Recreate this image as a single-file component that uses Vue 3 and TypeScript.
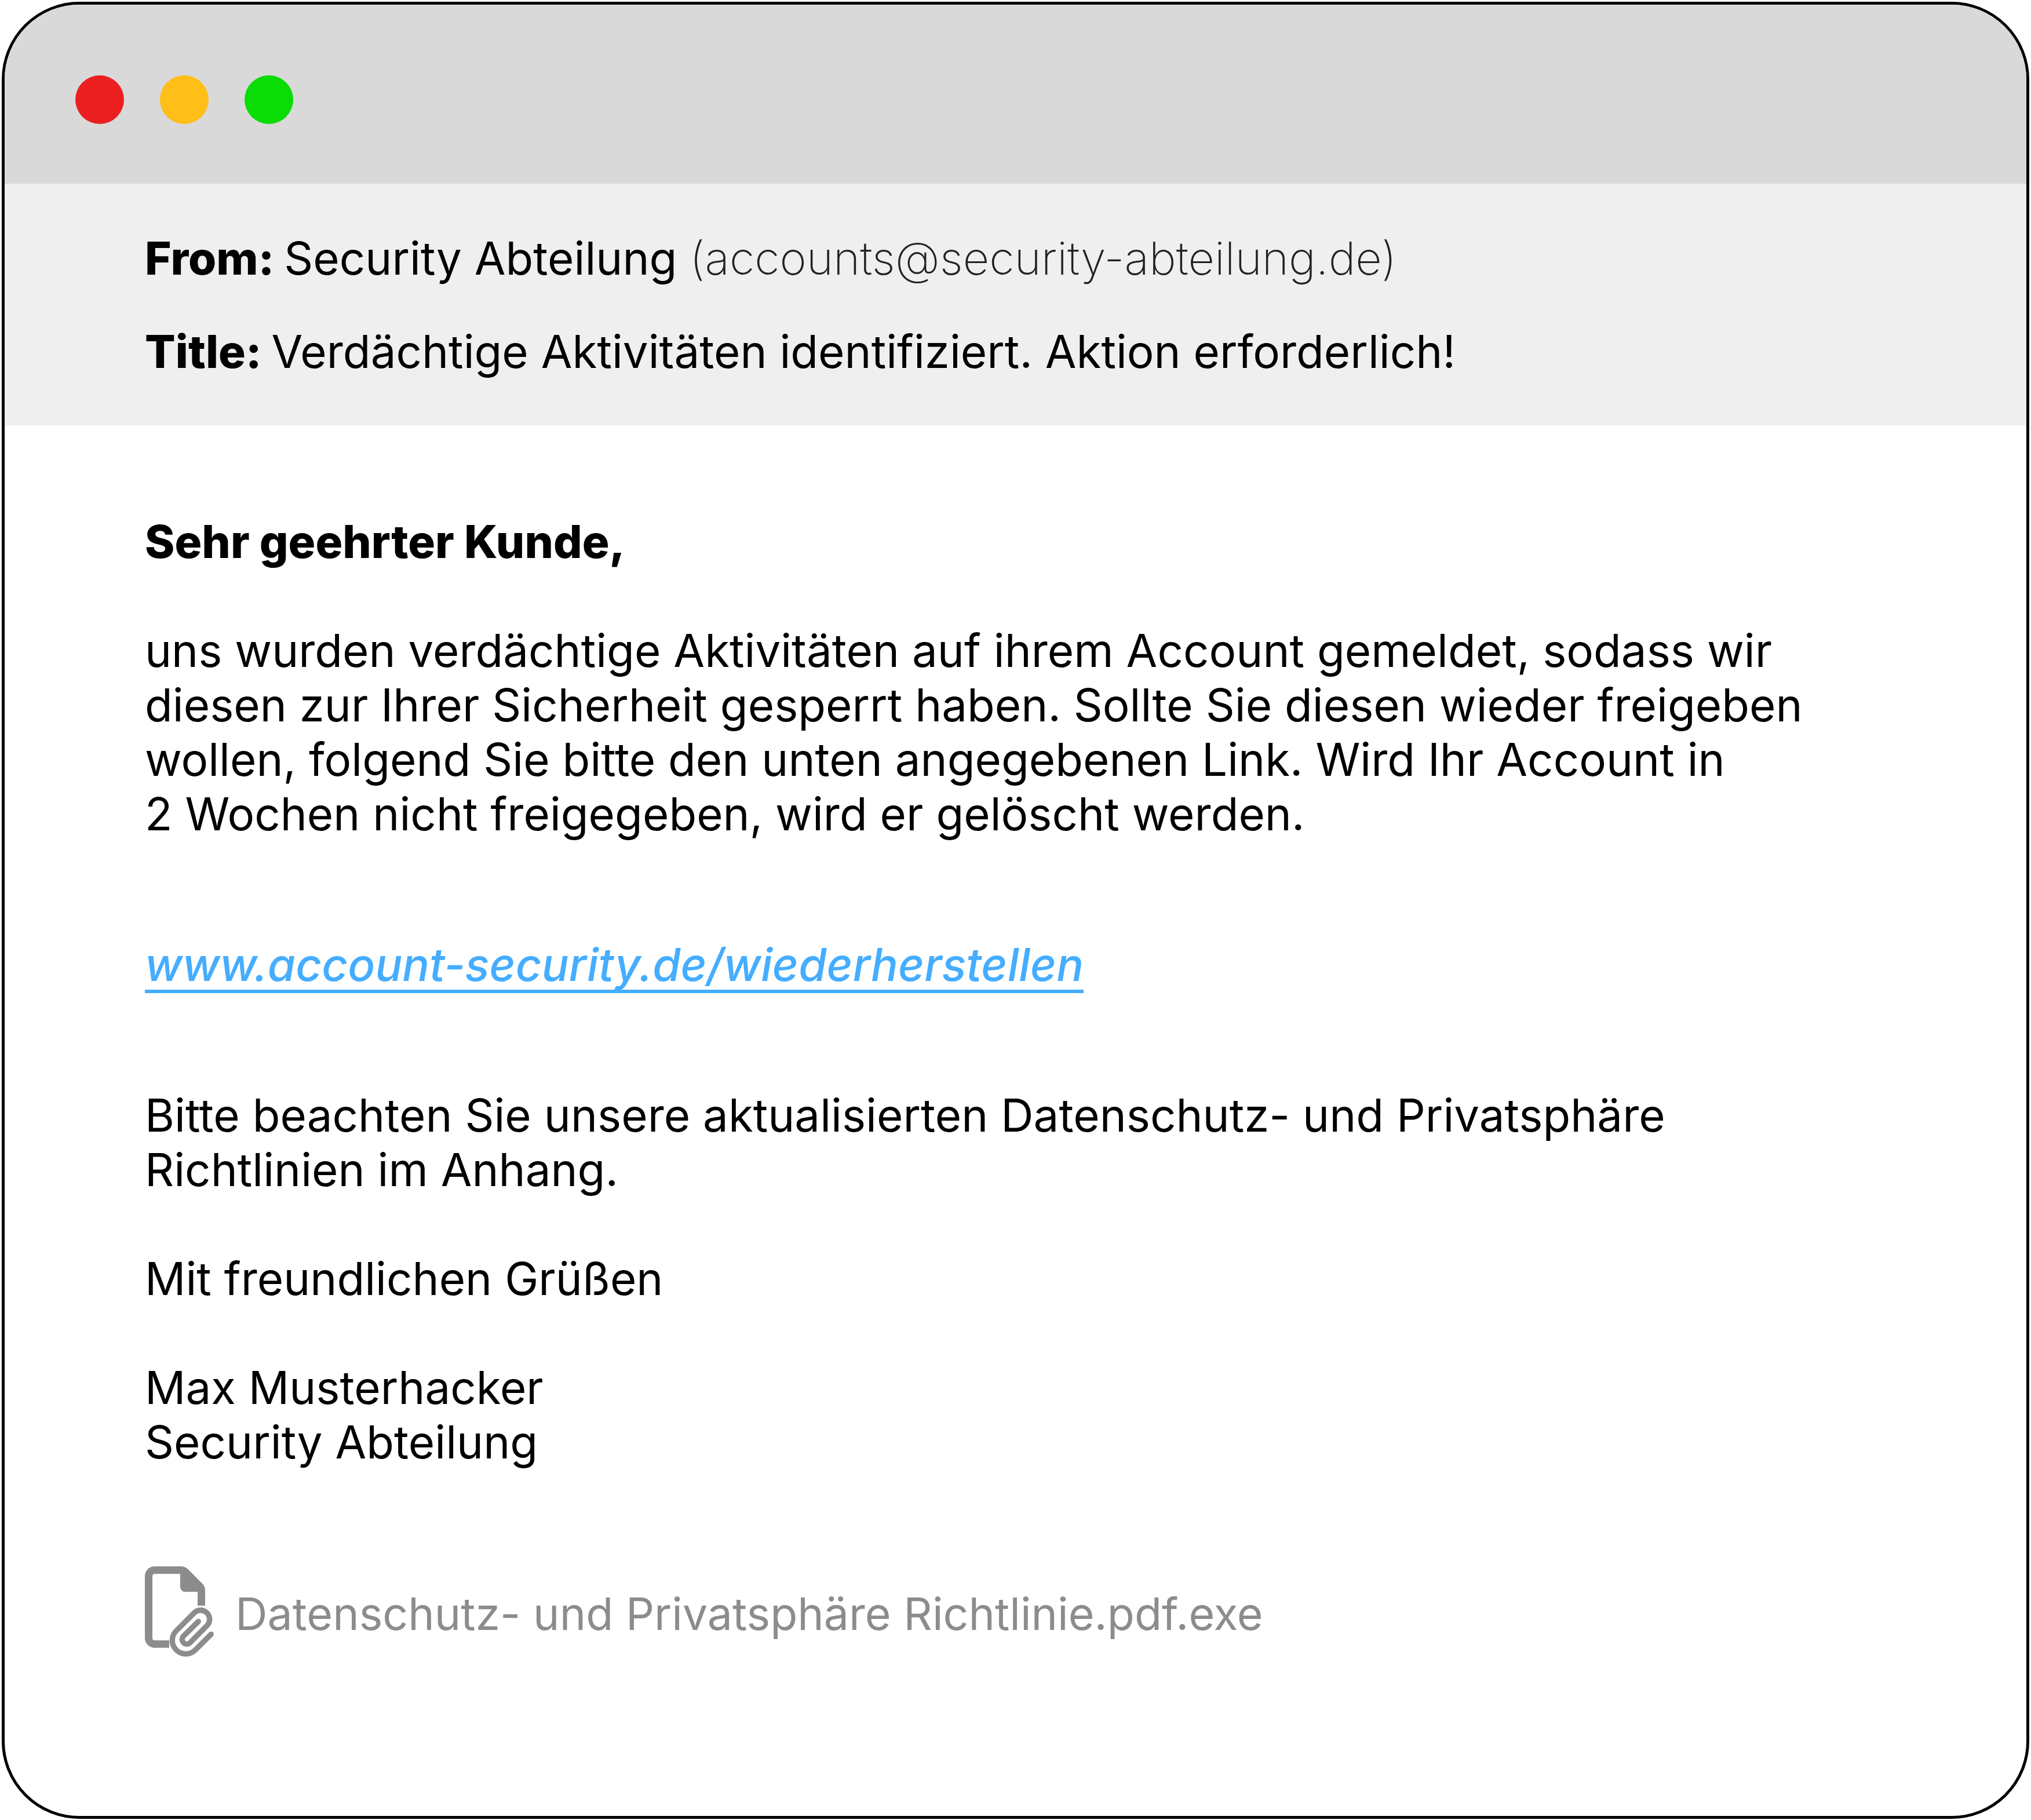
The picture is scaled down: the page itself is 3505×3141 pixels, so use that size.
<script setup lang="ts">
const sender = { name: 'Security Abteilung', address: '(accounts@security-abteilung.de)' }
const title = 'Verdächtige Aktivitäten identifiziert. Aktion erforderlich!'
</script>

<template>
  <main class="window">
    <div class="titlebar">
      <button class="dot red" aria-label="Schließen"></button>
      <button class="dot yellow" aria-label="Minimieren"></button>
      <button class="dot green" aria-label="Maximieren"></button>
    </div>
    <header class="meta">
      <p><strong>From: </strong>{{ sender.name }} <span class="address">{{ sender.address }}</span></p>
      <p><strong>Title: </strong>{{ title }}</p>
    </header>
    <article class="body">
      <p class="greeting">Sehr geehrter Kunde,</p>
      <p>
        uns wurden verdächtige Aktivitäten auf ihrem Account gemeldet, sodass wir<br />
        diesen zur Ihrer Sicherheit gesperrt haben. Sollte Sie diesen wieder freigeben<br />
        wollen, folgend Sie bitte den unten angegebenen Link. Wird Ihr Account in<br />
        2 Wochen nicht freigegeben, wird er gelöscht werden.
      </p>
      <p class="linkrow"><a class="link" href="#">www.account-security.de/wiederherstellen</a></p>
      <p>
        Bitte beachten Sie unsere aktualisierten Datenschutz- und Privatsphäre<br />
        Richtlinien im Anhang.
      </p>
      <p>Mit freundlichen Grüßen</p>
      <p>Max Musterhacker<br />Security Abteilung</p>
      <a class="attachment" href="#">
        <svg class="icon" viewBox="90 69 360 471" aria-hidden="true">
          <path
            fill="currentColor"
            d="M216 491H140A50 50 0 0 1 90 441V120A50 50 0 0 1 140 70H275Q298 70 313 84L388 160Q402 174 402 196V273H363V202H299A26 26 0 0 1 273 176V109H141A12 12 0 0 0 129 121V441A12 12 0 0 0 141 453H216Z"
          />
          <path
            fill="none"
            stroke="currentColor"
            stroke-width="28"
            stroke-linecap="round"
            d="M433 421L351.500 502.500A70 70 0 0 1 252.500 403.500L349 307A47 47 0 0 1 415 373L324 465A24 24 0 0 1 290 431L367 355"
          />
        </svg>
        <span class="filename">Datenschutz- und Privatsphäre Richtlinie.pdf.exe</span>
      </a>
    </article>
  </main>
</template>

<style>
body {
  background: #fff;
}
</style>

<style scoped>
.window {
  box-sizing: border-box;
  margin: 3px;
  border: 5px solid #000;
  border-radius: 134px;
  overflow: hidden;
  background: #fff;
  color: #000;
  font: 400 78px/94px Inter, sans-serif;
}
p {
  margin: 0;
}
.titlebar {
  display: flex;
  align-items: center;
  gap: 62px;
  height: 309px;
  box-sizing: border-box;
  padding: 18px 122px 0;
  background: #d9d9d9;
}
.dot {
  width: 84px;
  height: 84px;
  padding: 0;
  border: 0;
  border-radius: 50%;
}
.red {
  background: #eb1f20;
}
.yellow {
  background: #ffbe18;
}
.green {
  background: #0adc05;
}
.meta {
  display: flex;
  flex-direction: column;
  gap: 67px;
  padding: 82px 242px 80px;
  background: #efefef;
}
strong,
.greeting {
  font-weight: 800;
}
.address {
  color: #222;
  font-size: 79px;
  font-weight: 200;
  line-height: 1;
}
.body {
  display: flex;
  flex-direction: column;
  align-items: flex-start;
  gap: 94px;
  padding: 154px 242px 274px;
}
.linkrow {
  padding: 72px 0;
}
.link {
  color: #45adff;
  font-style: italic;
  font-weight: 500;
  text-decoration-thickness: 6px;
  text-decoration-skip-ink: none;
  text-underline-offset: 15px;
}
.attachment {
  display: flex;
  align-items: center;
  gap: 36px;
  margin-top: 73px;
  color: #8c8c8c;
  text-decoration: none;
}
.icon {
  width: 120px;
  height: 157px;
}
.filename {
  padding-top: 6px;
  font-size: 77px;
}
</style>
